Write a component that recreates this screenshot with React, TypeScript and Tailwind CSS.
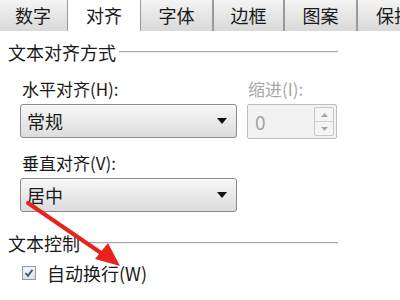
import React from 'react';

// Excel "设置单元格格式" dialog, 对齐 tab (cropped)

const tabs = [
  { label: '数字', w: 'w-[70px] -ml-[2px]' },
  { label: '对齐', w: 'w-[72px]', active: true },
  { label: '字体', w: 'w-[73px]' },
  { label: '边框', w: 'w-[71px]' },
  { label: '图案', w: 'w-[73px]' },
  { label: '保护', w: 'w-[74px]' },
];

function Tab({ label, w, active }: { label: string; w: string; active?: boolean }) {
  if (active) {
    return (
      <div className={`${w} shrink-0 h-[32px] -mb-px bg-white flex items-start justify-center pt-[2px] text-[18px] text-[#1a1a1a]`}>
        {label}
      </div>
    );
  }
  return (
    <div
      className={`${w} shrink-0 h-[31px] border-x border-[#9a9a9a] bg-gradient-to-b from-[#f4f4f4] to-[#d9d9d9] flex items-center justify-center text-[18px] text-[#1a1a1a]`}
    >
      {label}
    </div>
  );
}

function GroupHeader({ title }: { title: string }) {
  return (
    <div className="flex items-center h-[22px] pl-[8px] w-[338px]">
      <span className="text-[18px] text-[#1a1a1a] leading-none">{title}</span>
      <div className="flex-1 ml-[3px] h-[2px] border-t border-[#a8a8a8] border-b border-b-[#ececec]" />
    </div>
  );
}

function Select({ value }: { value: string }) {
  return (
    <div className="w-[217px] h-[34px] rounded-[3px] border border-[#8a8b8c] bg-gradient-to-b from-[#f7f7f7] to-[#dcdcdc] flex items-center justify-between pl-[6px] pr-[9px] shadow-[inset_0_1px_0_#ffffff]">
      <span className="text-[18px] text-[#1a1a1a] leading-none">{value}</span>
      <svg width="10" height="6" viewBox="0 0 10 6">
        <path d="M0 0 L10 0 L5 6 Z" fill="#111" />
      </svg>
    </div>
  );
}

function Spinner() {
  return (
    <div className="w-[90px] h-[35px] border border-[#bdbdbd] rounded-[2px] bg-[#f2f2f2] flex items-center justify-between pl-[7px] pr-[2px]">
      <span className="text-[19px] text-[#a3a3a3] leading-none">0</span>
      <div className="w-[20px] h-[29px] border border-[#c6c6c6] rounded-[2px] flex flex-col bg-[#f5f5f5]">
        <div className="flex-1 flex items-center justify-center border-b border-[#cfcfcf]">
          <svg width="7" height="4" viewBox="0 0 7 4">
            <path d="M0 4 L7 4 L3.5 0 Z" fill="#a5a5a5" />
          </svg>
        </div>
        <div className="flex-1 flex items-center justify-center">
          <svg width="7" height="4" viewBox="0 0 7 4">
            <path d="M0 0 L7 0 L3.5 4 Z" fill="#a5a5a5" />
          </svg>
        </div>
      </div>
    </div>
  );
}

export default function App() {
  return (
    <div className="relative w-[400px] h-[300px] overflow-hidden bg-white font-['Noto_Sans_CJK_SC',sans-serif]">
      {/* Tabs */}
      <div className="flex h-[31px] border-b border-[#b4b4b4]">
        {tabs.map((t) => (
          <Tab key={t.label} {...t} />
        ))}
      </div>

      {/* 文本对齐方式 */}
      <div className="mt-[10px]">
        <GroupHeader title="文本对齐方式" />
      </div>

      <div className="flex pl-[20px] mt-[14px]">
        <div className="flex flex-col">
          <div className="h-[22px] flex items-center pl-[2px] text-[17px] text-[#1a1a1a] leading-none">水平对齐(H):</div>
          <div className="mt-[5px]">
            <Select value="常规" />
          </div>
        </div>
        <div className="flex flex-col ml-[10px]">
          <div className="h-[22px] flex items-center pl-[1px] text-[17px] text-[#a8a8a8] leading-none">缩进(I):</div>
          <div className="mt-[5px]">
            <Spinner />
          </div>
        </div>
      </div>

      <div className="pl-[20px] mt-[12px]">
        <div className="h-[22px] flex items-center pl-[2px] text-[17px] text-[#1a1a1a] leading-none">垂直对齐(V):</div>
        <div className="mt-[5px]">
          <Select value="居中" />
        </div>
      </div>

      {/* 文本控制 */}
      <div className="mt-[20px]">
        <GroupHeader title="文本控制" />
      </div>

      <div className="flex items-center h-[22px] pl-[22px] mt-[8px]">
        <div className="w-[14px] h-[14px] border border-[#8f9aa8] bg-gradient-to-b from-[#f4f6f9] to-[#dde3ea] flex items-center justify-center">
          <svg width="10" height="10" viewBox="0 0 10 10">
            <path d="M1.5 5 L4 7.8 L8.5 1.8" stroke="#3b4d6b" strokeWidth="1.8" fill="none" />
          </svg>
        </div>
        <span className="ml-[11px] text-[18px] text-[#1a1a1a] leading-none">自动换行(W)</span>
      </div>

      {/* red annotation arrow */}
      <svg className="absolute left-0 top-0 pointer-events-none" width="400" height="300" viewBox="0 0 400 300">
        <line x1="28" y1="203" x2="104" y2="255" stroke="#e8231f" strokeWidth="4" strokeLinecap="round" />
        <path d="M120 266 L95 259 L108 243 Z" fill="#e8231f" />
      </svg>
    </div>
  );
}
